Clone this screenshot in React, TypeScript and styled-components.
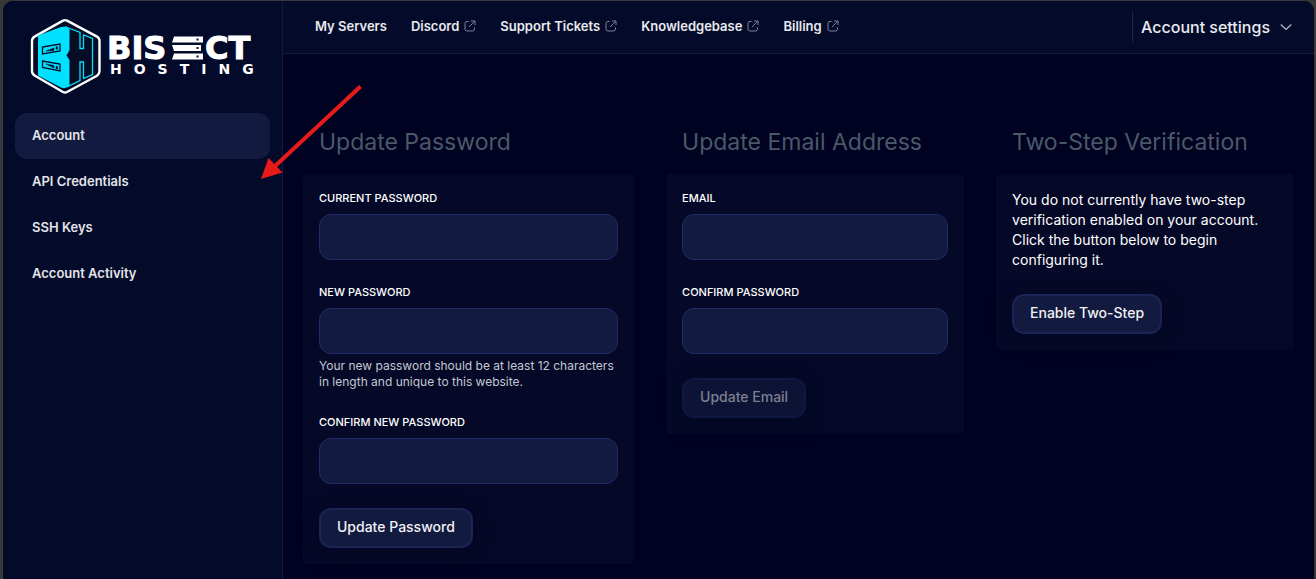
import React from "react";
import styled, { createGlobalStyle } from "styled-components";

const GlobalStyle = createGlobalStyle`
  *, *::before, *::after { box-sizing: border-box; }
  body {
    margin: 0;
    background: #383838;
    color: #fff;
    font-family: Inter, "Liberation Sans", sans-serif;
    font-size: 13px;
    line-height: 20px;
  }
`;

const Window = styled.div`
  position: relative;
  display: grid;
  grid-template-columns: 280px minmax(0, 1fr);
  min-height: calc(100vh - 1px);
  margin: 1px 2px 0 3px;
  border-radius: 10px 10px 0 0;
  background: #010122;
  overflow: hidden;
`;

const Sidebar = styled.aside`
  padding: 16px 12px;
  background: #040a2a;
  border-right: 1px solid #131a40;
`;

const LogoLink = styled.a`
  display: block;
  height: 80px;
  margin: 0 0 16px 13px;
`;

const SideNav = styled.nav`
  display: flex;
  flex-direction: column;
`;

const SideLink = styled.a<{ $active?: boolean }>`
  padding: 12px 17px 14px;
  border-radius: 12px;
  background: ${(p) => (p.$active ? "#131a3f" : "transparent")};
  color: #e3e4e9;
  font-weight: 600;
  text-decoration: none;
`;

const Main = styled.div`
  min-width: 0;
`;

const TopBar = styled.header`
  display: flex;
  align-items: center;
  justify-content: space-between;
  height: 53px;
  padding: 0 22px 0 32px;
  background: #040a2a;
  border-bottom: 1px solid #131a40;
`;

const TopNav = styled.nav`
  display: flex;
  gap: 24px;
  padding-bottom: 2px;
`;

const TopLink = styled.a`
  display: flex;
  align-items: center;
  gap: 5px;
  color: #e9eaee;
  font-weight: 600;
  text-decoration: none;
  white-space: nowrap;
`;

const AccountButton = styled.button`
  display: flex;
  align-items: center;
  gap: 10px;
  height: 32px;
  padding: 0 0 0 8px;
  border: 0;
  border-left: 1px solid #1b2458;
  background: none;
  color: #e9eaee;
  font: 500 16px/20px Inter, "Liberation Sans", sans-serif;
`;

const Content = styled.main`
  display: grid;
  grid-template-columns: 10fr 9fr 9fr;
  align-items: start;
  gap: 32px;
  padding: 72px 20px 15px;
`;

const Title = styled.h2`
  margin: 0 0 16px;
  padding: 0 16px;
  color: #4a5966;
  font-size: 23px;
  font-weight: 400;
  line-height: 32px;
  white-space: nowrap;
`;

const Card = styled.div`
  padding: 16px;
  border-radius: 4px;
  background: #050927;
`;

const Form = styled.form`
  display: flex;
  flex-direction: column;
  align-items: flex-start;
  gap: 24px;
`;

const FieldBox = styled.div`
  width: 100%;
`;

const Label = styled.label`
  display: block;
  margin-bottom: 8px;
  font-size: 11px;
  font-weight: 500;
  line-height: 16px;
  text-transform: uppercase;
`;

const Input = styled.input`
  display: block;
  width: 100%;
  height: 46px;
  padding: 0 12px;
  border: 1px solid #202a66;
  border-radius: 12px;
  background: #131a3f;
  color: #fff;
  font: inherit;
`;

const Hint = styled.p`
  margin: 4px 0 0;
  color: #c3c8d2;
  font-size: 12px;
  line-height: 16px;
`;

const Text = styled.p`
  margin: 0 0 24px;
  font-size: 14px;
`;

const Button = styled.button`
  height: 40px;
  padding: 0 16px 2px;
  border: 2px solid #1c2355;
  border-radius: 12px;
  background: #131a3f;
  box-shadow: 0 4px 20px rgba(1, 5, 34, 0.7);
  color: #f1f1f4;
  font: 500 14px/20px Inter, "Liberation Sans", sans-serif;
  white-space: nowrap;

  &:disabled {
    border-color: #101742;
    background: #0d1335;
    color: #7d8090;
  }
`;

const Arrow = styled.svg`
  position: absolute;
  left: 252px;
  top: 80px;
  pointer-events: none;
`;

const Logo = () => (
  <svg width="240" height="80" viewBox="0 0 240 80" role="img" aria-label="Bisect Hosting">
    <path
      d="M35 3.600Q37 2.600 39 3.600L69 19.600Q71.500 21 71.500 24V54Q71.500 57 69 58.800L39 75Q37 76 35 75L7 58.800Q4 57 4 54V24Q4 21 7 19.400Z"
      fill="#080d26"
      stroke="#fff"
      strokeWidth="2.400"
      strokeLinejoin="round"
    />
    <path
      d="M10 18.500 33 10Q37 9 41.500 12V33L38.500 38.500 41.500 43V68.500Q37 72.500 33 70.500L10 58.500Z"
      fill="#00e0ff"
    />
    <path
      d="M37 9.500 52 15.500V31.500H55.500V18L64.500 21.500V57.500L55.500 61.500V45H52V63.500L39 70"
      fill="none"
      stroke="#00e0ff"
      strokeWidth="1.300"
    />
    <g fill="#00e0ff" stroke="#080d26" strokeWidth="1.300">
      <path d="M14.500 30 32 27V34L14.500 37ZM14.500 44 32 47V54L14.500 50.500Z" />
    </g>
    <path
      d="M18 34 26 31V33.500ZM28 29.800h1.600v2.400H28ZM18 47 26 51V48.500ZM28 49.500h1.600v2.400H28Z"
      fill="#080d26"
      stroke="#080d26"
      strokeWidth=".5"
    />
    <g fill="#fff" fontFamily="DejaVu Sans" fontWeight="700">
      <g fontSize="32" stroke="#fff" strokeWidth="1">
        <text x="79" y="42">BIS</text>
        <text x="177" y="42">CT</text>
      </g>
      <text x="82" y="57" fontSize="14" letterSpacing="12">HOSTING</text>
    </g>
    <path d="M146 19.500h29v6H144ZM144 28h29v6H146ZM146 36.500h29v6H144Z" fill="#fff" />
    <path d="M168.500 21.500h2v2h-2ZM168.500 30h2v2h-2ZM168.500 38.500h2v2h-2Z" fill="#080d26" />
  </svg>
);

const ExternalIcon = () => (
  <svg width="12" height="12" viewBox="0 0 12 12" fill="none" stroke="#7c8294" strokeWidth="1" aria-hidden="true">
    <path d="M4.500 1.500H3Q1 1.500 1 3.500V9Q1 11 3 11H8.500Q10.500 11 10.500 9V7.500" />
    <path d="M7 1h4v4M11 1 5 7" />
  </svg>
);

const Chevron = () => (
  <svg width="12" height="8" viewBox="0 0 12 8" fill="none" stroke="#b9bcc8" strokeWidth="1.200" aria-hidden="true">
    <path d="M.8 1.500 6 6.500 11.200 1.500" />
  </svg>
);

const topLinks = [
  { label: "My Servers", external: false },
  { label: "Discord", external: true },
  { label: "Support Tickets", external: true },
  { label: "Knowledgebase", external: true },
  { label: "Billing", external: true },
];

const sideLinks = ["Account", "API Credentials", "SSH Keys", "Account Activity"];

type FieldProps = { id: string; label: string; type: string; hint?: string };

const Field = ({ id, label, type, hint }: FieldProps) => (
  <FieldBox>
    <Label htmlFor={id}>{label}</Label>
    <Input id={id} type={type} />
    {hint && <Hint>{hint}</Hint>}
  </FieldBox>
);

export default function App() {
  return (
    <>
      <GlobalStyle />
      <Window>
        <Sidebar>
          <LogoLink href="#home">
            <Logo />
          </LogoLink>
          <SideNav>
            {sideLinks.map((label, i) => (
              <SideLink key={label} href="#" $active={i === 0}>
                {label}
              </SideLink>
            ))}
          </SideNav>
        </Sidebar>
        <Main>
          <TopBar>
            <TopNav>
              {topLinks.map(({ label, external }) => (
                <TopLink key={label} href="#">
                  {label}
                  {external && <ExternalIcon />}
                </TopLink>
              ))}
            </TopNav>
            <AccountButton type="button">
              Account settings
              <Chevron />
            </AccountButton>
          </TopBar>
          <Content>
            <section>
              <Title>Update Password</Title>
              <Card>
                <Form>
                  <Field id="current" label="Current Password" type="password" />
                  <Field
                    id="new"
                    label="New Password"
                    type="password"
                    hint="Your new password should be at least 12 characters in length and unique to this website."
                  />
                  <Field id="confirm-new" label="Confirm New Password" type="password" />
                  <Button type="button">Update Password</Button>
                </Form>
              </Card>
            </section>
            <section>
              <Title>Update Email Address</Title>
              <Card>
                <Form>
                  <Field id="email" label="Email" type="email" />
                  <Field id="confirm" label="Confirm Password" type="password" />
                  <Button type="button" disabled>
                    Update Email
                  </Button>
                </Form>
              </Card>
            </section>
            <section>
              <Title>Two-Step Verification</Title>
              <Card>
                <Text>
                  You do not currently have two-step verification enabled on your account. Click the button below to
                  begin configuring it.
                </Text>
                <Button type="button">Enable Two-Step</Button>
              </Card>
            </section>
          </Content>
        </Main>
        <Arrow width="112" height="102" viewBox="0 0 112 102" aria-hidden="true">
          <path d="M105.500 5.500 19 86" stroke="#e81b1b" strokeWidth="4" />
          <path d="M6 98 13.500 77 27.500 91.500Z" fill="#e81b1b" />
        </Arrow>
      </Window>
    </>
  );
}
